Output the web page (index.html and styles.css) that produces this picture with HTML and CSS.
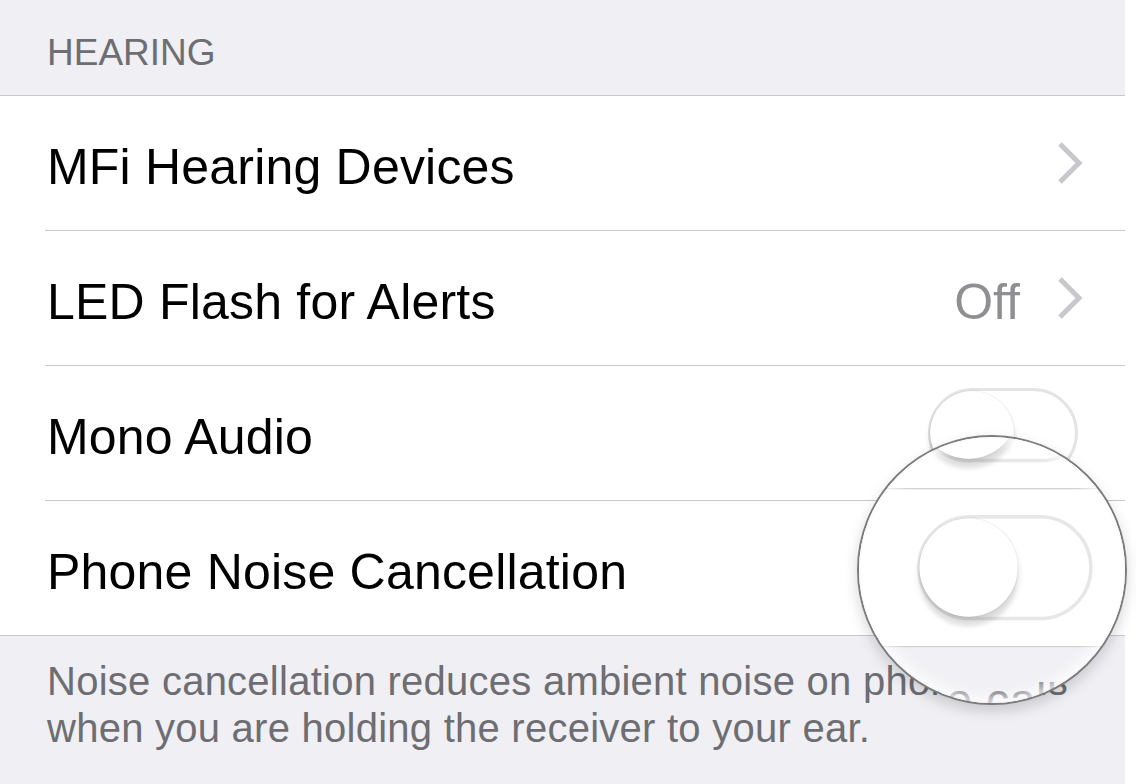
FILE: index.html
```html
<!DOCTYPE html>
<html lang="en">
<head>
<meta charset="utf-8">
<title>Hearing</title>
<link rel="stylesheet" href="styles.css">
</head>
<body>
<div class="screen">
  <div class="page">
    <div class="header">HEARING</div>
    <div class="list">
      <div class="row"><div class="row-inner"><span class="label">MFi Hearing Devices</span><span class="spacer"></span><svg class="chev" width="26" height="44" viewBox="0 0 26 44"><path d="M3 3 L22 22 L3 41" fill="none" stroke="#c7c7cc" stroke-width="5"/></svg></div></div>
      <div class="row"><div class="row-inner"><span class="label">LED Flash for Alerts</span><span class="spacer"></span><span class="detail">Off</span><svg class="chev" width="26" height="44" viewBox="0 0 26 44"><path d="M3 3 L22 22 L3 41" fill="none" stroke="#c7c7cc" stroke-width="5"/></svg></div></div>
      <div class="row"><div class="row-inner"><span class="label">Mono Audio</span><span class="spacer"></span><span class="switch"><span class="knob"></span></span></div></div>
      <div class="row"><div class="row-inner"><span class="label">Phone Noise Cancellation</span><span class="spacer"></span><span class="switch"><span class="knob"></span></span></div></div>
    </div>
    <div class="footer">Noise cancellation reduces ambient noise on phone calls<br>when you are holding the receiver to your ear.</div>
  </div>

  <div class="lens" aria-hidden="true">
    <div class="lens-view">
      <div class="page">
        <div class="header"></div>
        <div class="list">
          <div class="row"><div class="row-inner"></div></div>
          <div class="row"><div class="row-inner"></div></div>
          <div class="row"><div class="row-inner"><span class="spacer"></span><span class="switch"><span class="knob"></span></span></div></div>
          <div class="row"><div class="row-inner"><span class="spacer"></span><span class="switch"><span class="knob"></span></span></div></div>
        </div>
        <div class="footer footer-lens">phone calls</div>
      </div>
    </div>
  </div>
</div>
</body>
</html>
```
FILE: styles.css
```css
* { box-sizing: border-box; margin: 0; padding: 0; }
html, body { background: #ffffff; }
body { margin: 0; font-family: "Liberation Sans", Arial, sans-serif; }

.screen { position: relative; width: 1136px; height: 784px; overflow: hidden; }

.page { width: 1125px; height: 784px; background: #efeff4; }

.header {
  height: 95px;
  padding: 31px 0 0 47px;
  font-size: 37px;
  line-height: 44px;
  color: #6d6d72;
}

.list {
  background: #ffffff;
  border-top: 1px solid #c8c7cc;
  border-bottom: 1px solid #c8c7cc;
}

.row { height: 135px; padding-left: 45px; display: flex; }
.row:last-child { height: 134px; }

.row-inner {
  flex: 1;
  display: flex;
  align-items: center;
  padding-left: 2px;
  padding-right: 44px;
  border-bottom: 1px solid #c8c7cc;
}
.row:last-child .row-inner { border-bottom: none; }

.label {
  font-size: 50px;
  letter-spacing: 0.2px;
  color: #000000;
  padding-top: 8px;
}
.spacer { flex: 1; }
.detail {
  font-size: 50px;
  color: #8e8e93;
  padding-top: 8px;
  margin-right: 37px;
}
.chev { display: block; flex: none; margin-right: -2px; }

.switch {
  position: relative;
  flex: none;
  width: 150px;
  height: 90px;
  border-radius: 45px;
  border: 3px solid #e4e4e6;
  background: #ffffff;
  margin-right: 3px;
}
.knob {
  position: absolute;
  left: -1px;
  top: 0;
  width: 84px;
  height: 84px;
  border-radius: 50%;
  background: #ffffff;
  box-shadow: 0 0 0 1px rgba(0,0,0,0.05), 0 6px 6px rgba(0,0,0,0.14), 0 9px 3px rgba(0,0,0,0.05);
}

.footer {
  padding: 22px 0 0 47px;
  font-size: 40px;
  line-height: 47px;
  letter-spacing: 0.25px;
  color: #6d6d72;
  white-space: nowrap;
}
.footer-lens { padding-left: 863px; }

.lens {
  position: absolute;
  left: 857px;
  top: 435px;
  width: 270px;
  height: 270px;
  border-radius: 50%;
  overflow: hidden;
  border: 2px solid #7b7b7b;
  background: #ffffff;
  box-shadow: 0 6px 14px rgba(0,0,0,0.16);
}
.lens::after {
  content: "";
  position: absolute;
  inset: 0;
  border-radius: 50%;
  box-shadow: inset 0 0 14px 5px rgba(255,255,255,0.9), inset 0 0 2px 1px rgba(0,0,0,0.08);
  background: rgba(255,255,255,0.12);
}
.lens-view {
  position: absolute;
  left: -859px;
  top: -437px;
  width: 1136px;
  height: 784px;
  background: #ffffff;
  transform: scale(1.17);
  transform-origin: 992px 570px;
}
```
